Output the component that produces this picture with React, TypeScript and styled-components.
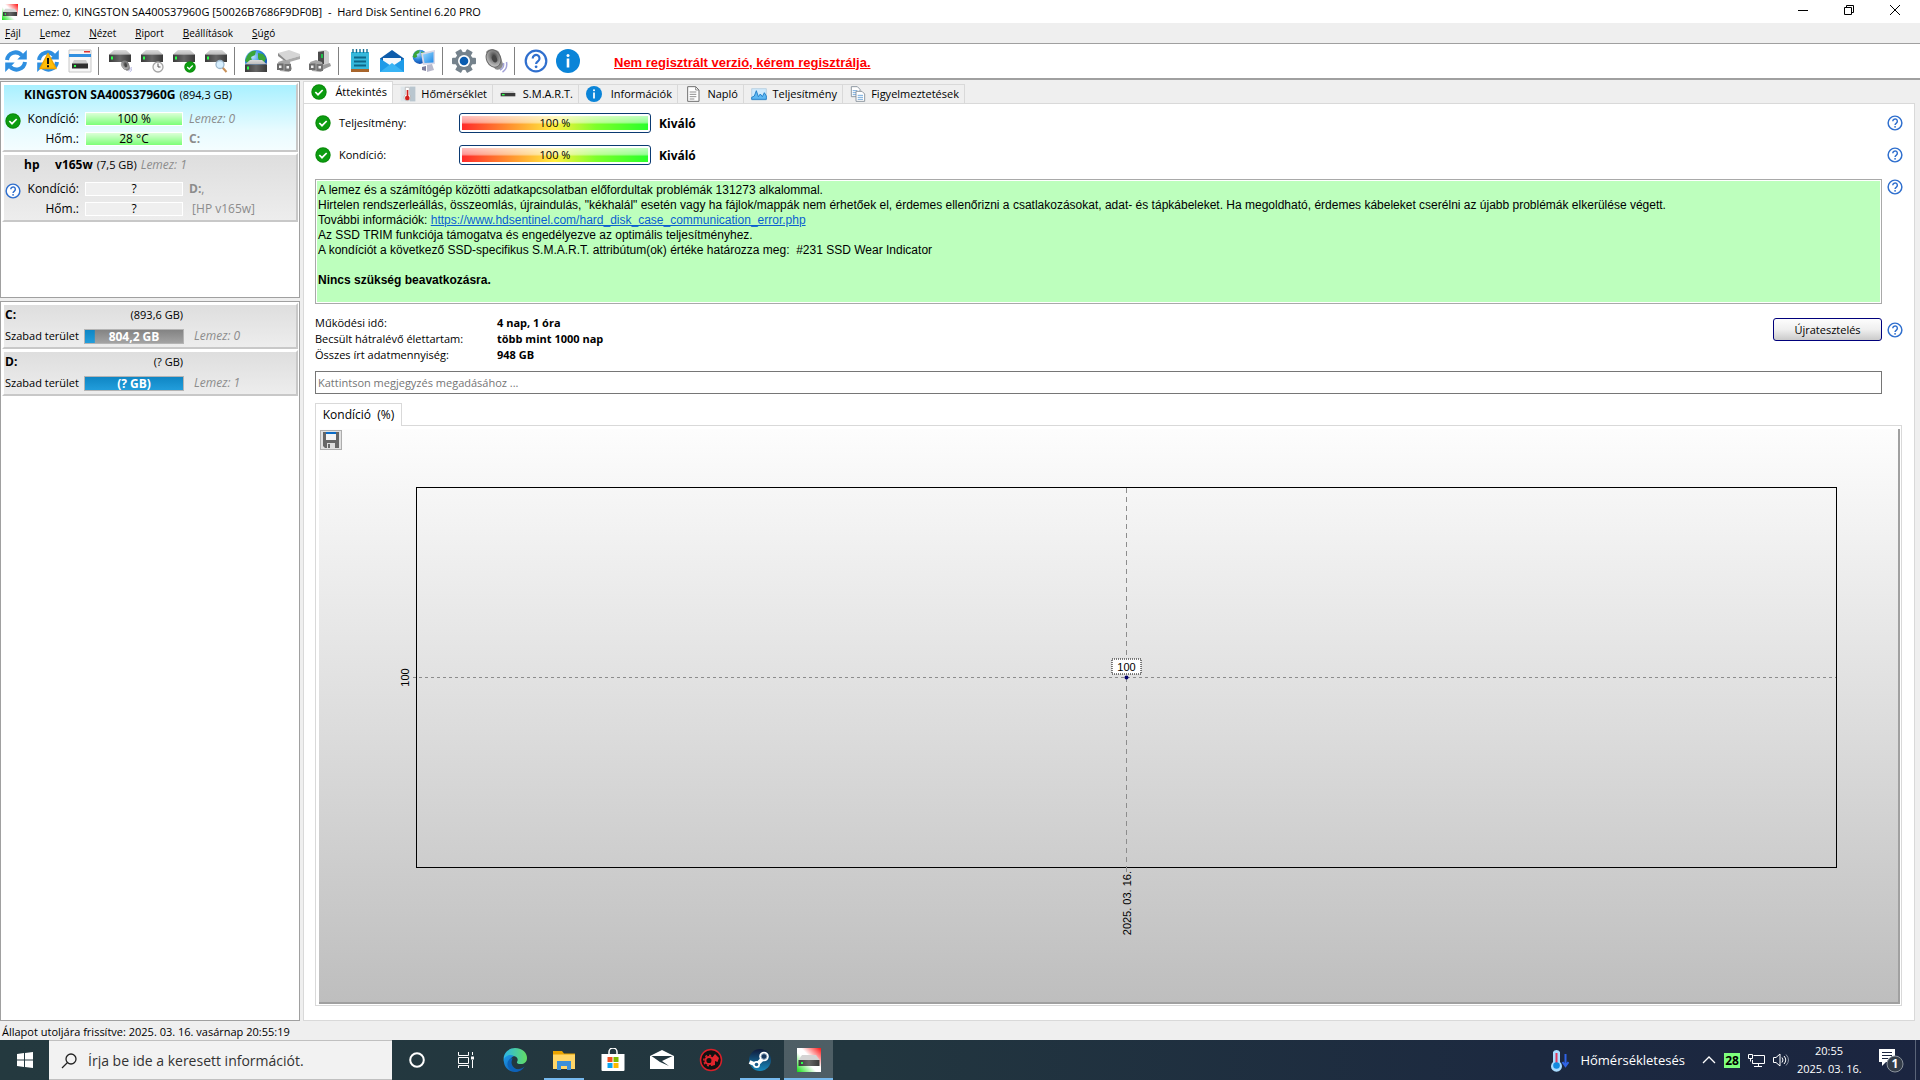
import React from "react";
import styled, { createGlobalStyle, css } from "styled-components";

const ui = '"Open Sans", "Noto Sans", sans-serif';
const arial = '"Liberation Sans", Arial, sans-serif';

const GlobalStyle = createGlobalStyle`
  *, *::before, *::after { box-sizing: border-box; }
  body { margin: 0; background: #efefef; color: #000; font: 12px/16px ${ui}; }
  button, input { font: inherit; color: inherit; margin: 0; }
  button { background: none; border: 0; padding: 0; }
  h1, p, dl, dd { margin: 0; font: inherit; }
  svg { display: block; flex: none; }
`;

/* ---------- window frame ---------- */

const Screen = styled.div`
  min-height: 100vh;
  display: flex;
  flex-direction: column;
`;

const TitleBar = styled.header`
  height: 23px;
  padding: 0 2px;
  background: #fff;
  display: flex;
  align-items: center;
  gap: 5px;
`;

const WindowTitle = styled.h1`
  flex: 1;
  font-size: 11px;
  white-space: pre;
`;

const WindowControls = styled.div`
  display: flex;
  align-self: stretch;
  padding-bottom: 3px;
`;

const ControlButton = styled.button`
  width: 46px;
  display: grid;
  place-items: center;
`;

const MenuBar = styled.nav`
  height: 20px;
  padding-left: 5px;
  display: flex;
  align-items: center;
  gap: 19px;
  font-size: 10px;
`;

const Toolbar = styled.div`
  height: 37px;
  background: #fff;
  border-top: 1px solid #a0a0a0;
  border-bottom: 2px solid #a0a0a0;
  display: flex;
  align-items: center;
`;

const ToolButton = styled.button`
  width: 32px;
  height: 32px;
  display: grid;
  place-items: center;
`;

const ToolSeparator = styled.span`
  width: 1px;
  height: 28px;
  margin: 0 5px 0 2px;
  background: #808080;
`;

const RegisterLink = styled.a`
  margin-left: 30px;
  padding-top: 4px;
  color: #f00;
  font: bold 13px/16px ${arial};
`;

const Workspace = styled.div`
  flex: 1;
  display: flex;
  gap: 3px;
  padding: 1px 5px 0 0;
`;

/* ---------- side panels ---------- */

const Sidebar = styled.aside`
  width: 300px;
  flex: none;
  display: flex;
  flex-direction: column;
  gap: 3px;
`;

const ListPanel = styled.section<{ $grow?: boolean }>`
  border: 1px solid #a0a0a0;
  background: #fff;
  padding: 1px;
  ${(p) => (p.$grow ? "flex: 1;" : "height: 217px;")}
`;

const Card = styled.article<{ $active?: boolean }>`
  border: 2px solid #fff;
  border-right-color: #c8c8c8;
  border-bottom-color: #c8c8c8;
  margin-bottom: 1px;
  background: ${(p) =>
    p.$active
      ? "linear-gradient(#a8f0ff, #e8fbff 70%, #f4fdff)"
      : "linear-gradient(#dedede, #ededed)"};
`;

const CardTitle = styled.div`
  height: 20px;
  padding-left: 20px;
  display: flex;
  align-items: center;
  gap: 4px;
  white-space: pre;
`;

const Capacity = styled.span`
  font-size: 11px;
`;

const DiskGrid = styled.div`
  display: grid;
  grid-template-columns: 16px 52px 98px 1fr;
  grid-auto-rows: 20px;
  align-items: center;
  column-gap: 6px;
  padding: 4px 0 1px 1px;
`;

const StateIcon = styled.span`
  grid-row: 1 / span 2;
  align-self: start;
  padding-top: 4px;
`;

const FieldLabel = styled.span`
  text-align: right;
  white-space: nowrap;
`;

const ValueBar = styled.span<{ $good?: boolean }>`
  height: 14px;
  border: 1px solid #fff;
  background: ${(p) => (p.$good ? "linear-gradient(#dcffd8, #7cff78)" : "#efefef")};
  display: grid;
  place-items: center;
  line-height: 12px;
`;

const Note = styled.span<{ $plain?: boolean }>`
  color: #8c8c8c;
  font-style: ${(p) => (p.$plain ? "normal" : "italic")};
  white-space: nowrap;
`;

const VolumeTitle = styled.div`
  height: 20px;
  padding-left: 1px;
  width: 179px;
  display: flex;
  align-items: center;
  justify-content: space-between;
`;

const VolumeRow = styled.div`
  height: 22px;
  padding-left: 1px;
  display: grid;
  grid-template-columns: 75px 100px 1fr;
  column-gap: 4px;
  align-items: center;
  white-space: nowrap;

  ${Note} { padding-left: 6px; }
`;

const SpaceBar = styled.span<{ $used: number }>`
  height: 15px;
  border: 1px solid #b4b4b4;
  display: grid;
  place-items: center;
  color: #fff;
  font-weight: bold;
  line-height: 13px;
  background:
    linear-gradient(#0f86c4, #229ddb) 0 0 / ${(p) => p.$used}% 100% no-repeat,
    linear-gradient(#838383, #a3a3a3);
`;

/* ---------- main area ---------- */

const Main = styled.main`
  flex: 1;
  min-width: 0;
  display: flex;
  flex-direction: column;
`;

const TabList = styled.div`
  display: flex;
  align-items: flex-end;
`;

const Tab = styled.button<{ $selected?: boolean; $width: number }>`
  width: ${(p) => p.$width}px;
  height: 19px;
  padding: 0 5px 0 7px;
  border: 1px solid #d9d9d9;
  border-width: 1px 1px 0 0;
  display: flex;
  align-items: center;
  justify-content: space-between;
  font-size: 11px;
  white-space: nowrap;
  ${(p) =>
    p.$selected &&
    css`
      height: 23px;
      margin-bottom: -1px;
      padding-bottom: 3px;
      border-left-width: 1px;
      background: #fff;
    `}
`;

const Content = styled.section`
  flex: 1;
  display: flex;
  flex-direction: column;
  padding: 9px 11px 14px;
  background: #fff;
  border: 1px solid #d9d9d9;
`;

const Row = styled.div<{ $top: number; $alignStart?: boolean }>`
  display: flex;
  align-items: ${(p) => (p.$alignStart ? "flex-start" : "center")};
  gap: 5px;
  margin-top: ${(p) => p.$top}px;
`;

const MetricLabel = styled.span`
  width: 139px;
  display: flex;
  align-items: center;
  gap: 8px;
  font-size: 11px;
`;

const Gauge = styled.div`
  width: 192px;
  height: 20px;
  padding: 1px;
  border: 1px solid #0b3a72;
  border-radius: 3px;
  margin-right: 3px;
`;

const GaugeFill = styled.div`
  height: 16px;
  border: 1px solid #fff;
  display: grid;
  place-items: center;
  font-size: 11px;
  line-height: 14px;
  background:
    linear-gradient(rgba(255, 255, 255, 0.7), rgba(255, 255, 255, 0.5) 45%, transparent 60%),
    linear-gradient(90deg, #ff2a2a, #ff9a30 28%, #ffee40 50%, #7dff2a 72%, #2aff2a);
`;

const Verdict = styled.b`
  padding-top: 1px;
`;

const Grow = styled.span`
  flex: 1;
`;

const HelpButton = styled.button`
  width: 16px;
  height: 16px;
  flex: none;
`;

const MessageBox = styled.div`
  flex: 1;
  min-height: 125px;
  border: 1px solid #a9a9a9;
  padding: 1px;
`;

const MessageText = styled.div`
  min-height: 121px;
  background: #bdffbd;
  padding: 2px 1px;
  font: 12px/15px ${arial};
  white-space: pre-wrap;

  a { color: #0a5fd0; }
`;

const Details = styled.dl`
  display: grid;
  grid-template-columns: 182px auto;
  font-size: 11px;
  line-height: 16px;

  dd { font-weight: bold; }
`;

const RetestButton = styled.button`
  width: 109px;
  height: 23px;
  border: 1px solid #00007b;
  border-radius: 3px;
  font-size: 11px;
  background: linear-gradient(#fdfdfd, #efefef 50%, #cacaca);
`;

const CommentInput = styled.input`
  height: 23px;
  margin: 8px 21px 0 0;
  padding: 0 2px;
  border: 1px solid #767676;
  border-radius: 0;
  font-size: 11px;
  background: #fff;

  &::placeholder { color: #757575; opacity: 1; }
`;

const ChartTab = styled.button`
  width: 87px;
  height: 23px;
  margin: 9px 0 -1px;
  border: 1px solid #d9d9d9;
  border-bottom: 0;
  background: #fff;
  position: relative;
  white-space: pre;
`;

const ChartFrame = styled.div`
  flex: 1;
  display: flex;
  margin-right: 1px;
  padding: 3px 1px 1px 3px;
  border: 1px solid #d9d9d9;
`;

const ChartArea = styled.div`
  flex: 1;
  display: flex;
  align-items: stretch;
  padding: 1px 61px 134px 1px;
  border: 1px solid #a0a0a0;
  border-width: 0 2px 2px 0;
  background: linear-gradient(#fdfdfd, #bebebe);
`;

const SaveButton = styled.button`
  width: 22px;
  height: 20px;
  border: 1px solid #adadad;
  background: #e1e1e1;
  display: grid;
  place-items: center;
`;

const Plot = styled.div`
  flex: 1;
  margin: 57px 0 0 74px;
  border: 1px solid #000;
  min-height: 200px;

  svg { width: 100%; height: 100%; overflow: visible; }
  text { font: 11px ${arial}; }
`;

const StatusBar = styled.footer`
  height: 19px;
  padding: 3px 2px 0;
  font-size: 11px;
`;

/* ---------- taskbar ---------- */

const Taskbar = styled.footer`
  height: 40px;
  display: flex;
  color: #fff;
  background: linear-gradient(90deg, #24393f, #22363f 45%, #1c2940 80%, #1b2540);
`;

const TaskButton = styled.button<{ $running?: boolean; $active?: boolean }>`
  width: 49px;
  display: grid;
  place-items: center;
  background: ${(p) => (p.$active ? "rgba(255, 255, 255, 0.2)" : "none")};
  ${(p) =>
    p.$running &&
    css`
      background-image: linear-gradient(#76b9ed, #76b9ed);
      background-repeat: no-repeat;
      background-position: bottom center;
      background-size: ${p.$active ? "100%" : "40px"} 2px;
    `}
`;

const SearchBox = styled.label`
  width: 343px;
  padding: 1px 0 0 12px;
  display: flex;
  align-items: center;
  gap: 11px;
  color: #222;
  background: #f2f2f2;
  border: 1px solid #c0c0c0;
  border-width: 1px 0;

  input {
    flex: 1;
    min-width: 0;
    border: 0;
    padding: 0;
    background: none;
    font-size: 14px;
  }
  input::placeholder { color: #333; opacity: 1; }
`;

const Tray = styled.div`
  margin-left: auto;
  display: flex;
  align-items: center;
`;

const WeatherButton = styled.button`
  display: flex;
  align-items: center;
  gap: 11px;
  margin-right: 17px;
  font-size: 13px;
`;

const TrayIcons = styled.div`
  display: flex;
  align-items: center;
  gap: 8px;
`;

const TempBadge = styled.span`
  width: 16px;
  height: 15px;
  background: #7dff7d;
  color: #000;
  display: grid;
  place-items: center;
  font-weight: bold;
  line-height: 15px;
`;

const Clock = styled.time`
  width: 64px;
  margin: 0 18px 0 7px;
  text-align: center;
  font-size: 11px;
  line-height: 18px;
  white-space: nowrap;
`;

const ShowDesktop = styled.button`
  width: 5px;
  align-self: stretch;
  margin-left: 11px;
  border-left: 1px solid #5a6478;
`;

/* ---------- drawings ---------- */

const Svg = ({ size = 24, children }: { size?: number; children: React.ReactNode }) => (
  <svg width={size} height={size} viewBox="0 0 24 24" aria-hidden="true">{children}</svg>
);

const HiddenSvg = styled.svg`
  position: absolute;
`;

const Defs = () => (
  <HiddenSvg width="0" height="0" aria-hidden="true">
    <defs>
      <linearGradient id="diskTop" x1="0" y1="0" x2="0" y2="1">
        <stop offset="0" stopColor="#dcdcdc" /><stop offset="1" stopColor="#b9b9b9" />
      </linearGradient>
      <linearGradient id="diskFront" x1="0" y1="0" x2="1" y2="0">
        <stop offset="0" stopColor="#3a3a3a" /><stop offset=".5" stopColor="#666" /><stop offset="1" stopColor="#3a3a3a" />
      </linearGradient>
      <linearGradient id="logoBg" x1="1" y1="0" x2="0" y2="1">
        <stop offset="0" stopColor="#ff1010" /><stop offset=".42" stopColor="#fff" />
        <stop offset=".58" stopColor="#fff" /><stop offset="1" stopColor="#10e010" />
      </linearGradient>
      <radialGradient id="globe" cx=".35" cy=".3" r=".8">
        <stop offset="0" stopColor="#bfe4ff" /><stop offset=".5" stopColor="#2a86e0" /><stop offset="1" stopColor="#0a3c9c" />
      </radialGradient>
      <linearGradient id="edgeBlue" x1="0" y1="0" x2="1" y2="1">
        <stop offset="0" stopColor="#1d9be8" /><stop offset="1" stopColor="#0c4fa8" />
      </linearGradient>
      <linearGradient id="edgeGreen" x1="0" y1="0" x2="1" y2="0">
        <stop offset="0" stopColor="#2cb5e8" /><stop offset="1" stopColor="#63dd62" />
      </linearGradient>
      <linearGradient id="steam" x1="0" y1="0" x2="0" y2="1">
        <stop offset="0" stopColor="#0f1a3a" /><stop offset="1" stopColor="#1789bd" />
      </linearGradient>
      <linearGradient id="screen" x1="0" y1="0" x2="1" y2="1">
        <stop offset="0" stopColor="#9bdcff" /><stop offset="1" stopColor="#2089e6" />
      </linearGradient>
      <radialGradient id="cone" cx=".6" cy=".4" r=".7">
        <stop offset="0" stopColor="#3c3c3c" /><stop offset=".35" stopColor="#777" /><stop offset="1" stopColor="#d8d8d8" />
      </radialGradient>
    </defs>
  </HiddenSvg>
);

const DiskShape = () => (
  <>
    <path d="M6 1h12l5 4.500H1z" fill="url(#diskTop)" />
    <path d="M1 5.500h22v7.500H1z" fill="url(#diskFront)" />
    <path d="M3 7.500h2v3H3z" fill="#2cff4a" />
  </>
);

const Logo = ({ size }: { size: number }) => (
  <Svg size={size}>
    <path d="M0 0h24v24H0z" fill="url(#logoBg)" />
    <path d="M5 7h14l3.500 5H1.500z" fill="#d4d4d4" />
    <path d="M1.500 12h21v6h-21z" fill="url(#diskFront)" />
    <path d="M4 14h2v2H4z" fill="#2cff4a" />
  </Svg>
);

const CheckShape = () => (
  <>
    <circle cx="12" cy="12" r="11.500" fill="#0a8a0a" />
    <circle cx="12" cy="12" r="10" fill="#0c9c10" />
    <path d="M6.500 12l4 4L17.500 9" fill="none" stroke="#fff" strokeWidth="2.600" />
  </>
);
const Check = ({ size = 16 }) => <Svg size={size}><CheckShape /></Svg>;

const Help = ({ size = 16 }) => (
  <Svg size={size}>
    <circle cx="12" cy="12" r="10.300" fill="#fff" stroke="#2f6fce" strokeWidth="2.200" />
    <path d="M8.700 9.400a3.400 3.400 0 1 1 5.400 2.700c-1.400 1-2 1.500-2 2.900" fill="none" stroke="#2f6fce" strokeWidth="2.200" />
    <circle cx="12.100" cy="17.800" r="1.400" fill="#2f6fce" />
  </Svg>
);

const Info = ({ size = 24 }) => (
  <Svg size={size}>
    <circle cx="12" cy="12" r="12" fill="#0a84d8" />
    <circle cx="12" cy="6.500" r="1.500" fill="#fff" />
    <path d="M10.700 9.600h2.600v9h-2.600z" fill="#fff" />
  </Svg>
);

const RefreshShape = () => (
  <g fill="none" stroke="#2f8fe0" strokeWidth="4">
    <path d="M3 11C4 3.500 13 .8 18 6.500" />
    <path d="M21 13c-1 7.500-10 10.200-15 4.500" />
    <path d="M22.800 1v9.500h-9.500zM1.200 23v-9.500h9.500z" fill="#2f8fe0" stroke="none" />
  </g>
);

const PlugShape = () => (
  <>
    <path d="M2 13l6-2 6 2 2 7-3 3-9-1z" fill="#a6a6a6" />
    <path d="M1 14.500h6.500V21H1z" fill="#6b6b6b" /><path d="M8.500 15H15v7H8.500z" fill="#747474" />
    <path d="M3 16.500h2.500V19H3zM10.500 17H13v2.500h-2.500z" fill="#f2f2f2" />
  </>
);

const SpeakerShape = () => (
  <>
    <path d="M2 3C5-1 12 0 15 3l4 12c0 4-4 7-8 5z" fill="#8a8a8a" />
    <ellipse cx="9.500" cy="9.500" rx="7" ry="9" fill="url(#cone)" stroke="#666" strokeWidth="1" transform="rotate(-25 9.500 9.500)" />
    <ellipse cx="10.500" cy="10" rx="2.500" ry="3.500" fill="#454545" transform="rotate(-25 10.500 10)" />
    <path d="M16 21c3-1.500 4-4 3.500-7M18.500 23c3.500-2 4.800-5.500 4-10" fill="none" stroke="#a3a3d8" strokeWidth="1.500" />
  </>
);

const GlobeShape = () => (
  <>
    <circle cx="12" cy="12" r="11" fill="url(#globe)" />
    <path d="M3 7c2-4 6-6 9-5l-1 4-4 2 1 4-4 2-3-2zM14 4l5 1 3 4-2 5-4-1-2-4z" fill="#3aa63a" />
  </>
);

const DocShape = () => (
  <>
    <path d="M4 1h12l5 5v17H4z" fill="#fff" stroke="#6f6f6f" strokeWidth="1.500" />
    <path d="M16 1v5h5M7 9h10M7 12.500h10M7 16h10M7 19.500h7" fill="none" stroke="#7d7d7d" strokeWidth="1.300" />
  </>
);

const toolGroups: { name: string; art: React.ReactNode }[][] = [
  [
    { name: "Frissítés", art: <RefreshShape /> },
    {
      name: "Teljes frissítés",
      art: (
        <>
          <RefreshShape />
          <path d="M12 4.500l8 15H4z" fill="#ffbe0a" stroke="#f0a500" strokeWidth="1.500" strokeLinejoin="round" />
          <path d="M11 9h2v6h-2zM11 16.300h2v2h-2z" fill="#111" />
        </>
      ),
    },
    {
      name: "Nézetváltás",
      art: (
        <>
          <path d="M1 1h22v22H1z" fill="#f6f6f6" stroke="#c8c8c8" />
          <path d="M1 5h22v3H1z" fill="#2f8fe0" /><path d="M16 2h6v1.500h-6z" fill="#d33" />
          <path d="M6 11h12l2 4H4z" fill="#ccc" /><path d="M4 14.500h16v5H4z" fill="#2e2e2e" />
          <path d="M6 16h2v2H6z" fill="#2cff4a" />
        </>
      ),
    },
  ],
  [
    { name: "Zaj beállítása", art: <><DiskShape /><g transform="translate(12.500 11.500) scale(.5)"><SpeakerShape /></g></> },
    {
      name: "Rövid teszt",
      art: (
        <>
          <DiskShape />
          <circle cx="18" cy="18" r="5" fill="#f8f8f8" stroke="#a5a5a5" strokeWidth="1.300" />
          <path d="M18 14.500V18h2.500" fill="none" stroke="#555" />
        </>
      ),
    },
    { name: "Hosszú teszt", art: <><DiskShape /><g transform="translate(12 12) scale(.5)"><CheckShape /></g></> },
    {
      name: "Felület teszt",
      art: (
        <>
          <DiskShape />
          <path d="M18.500 18.500l4 4.500" stroke="#c89058" strokeWidth="2" />
          <circle cx="16" cy="15.500" r="4" fill="#d6efff" stroke="#9db7cc" strokeWidth="1.300" />
        </>
      ),
    },
  ],
  [
    { name: "Online információ", art: <><GlobeShape /><g transform="translate(0 10)"><DiskShape /></g></> },
    {
      name: "USB eszköz",
      art: (
        <>
          <path d="M2 4l11-3 11 4v2L10 11z" fill="#d6d6d6" />
          <path d="M2 4l8 7v2L2 7z" fill="#8a8a8a" /><path d="M10 11l14-4v3l-14 4z" fill="#ababab" />
          <PlugShape />
        </>
      ),
    },
    {
      name: "Eszköz leválasztása",
      art: (
        <>
          <path d="M10 2l8-1 3 2v13l-11 1z" fill="#cfcfcf" /><path d="M10 3l6-1v13l-6 2z" fill="#4b4b4b" />
          <path d="M13 5h2v4h-2z" fill="#1fc04a" /><path d="M12 17l10-3 1 3-9 4z" fill="#9c9c9c" />
          <PlugShape />
        </>
      ),
    },
  ],
  [
    {
      name: "Jelentés",
      art: (
        <>
          <path d="M3 3h18v18H3z" fill="#35b8dc" /><path d="M3 20h18v3H3z" fill="#a8652c" />
          <path d="M5 0v4M8.500 0v4M12 0v4M15.500 0v4M19 0v4" stroke="#176f93" strokeWidth="1.400" />
          <path d="M6 8.500h12M6 12.500h12M6 16.500h12" stroke="#0d6688" strokeWidth="1.800" />
        </>
      ),
    },
    {
      name: "E-mail küldése",
      art: (
        <>
          <path d="M0 9.500L12 1l12 8.500V23H0z" fill="#0d5cab" />
          <path d="M3 9h18v8H3z" fill="#f4f8fc" />
          <path d="M0 9.500l12 8 12-8V23H0z" fill="#1e9be8" /><path d="M0 23l12-9 12 9z" fill="#38b4f5" />
        </>
      ),
    },
    {
      name: "Hálózat",
      art: (
        <>
          <g transform="scale(.65)"><GlobeShape /></g>
          <path d="M9 4l14-3v14l-12 1z" fill="#d8d8e8" /><path d="M11 5.500L21.500 3v10.500L12.500 14z" fill="url(#screen)" />
          <path d="M15 16l5-1 2 6-7 2z" fill="#b9b9cc" /><path d="M10 18l4-1v5l-4-1z" fill="#7c7c9a" />
        </>
      ),
    },
  ],
  [
    {
      name: "Beállítások",
      art: (
        <>
          <g fill="#75828c">
            <circle cx="12" cy="12" r="9" />
            {[30, 90, 150].map((a) => <rect key={a} x="8.700" y="0" width="6.600" height="24" rx="1" transform={`rotate(${a} 12 12)`} />)}
          </g>
          <circle cx="12" cy="12" r="6" fill="#fff" /><circle cx="12" cy="12" r="4.300" fill="#0a5cb0" />
        </>
      ),
    },
    { name: "Hang", art: <SpeakerShape /> },
  ],
];

const tabs = [
  { label: "Áttekintés", width: 90, icon: <Check /> },
  {
    label: "Hőmérséklet", width: 100,
    icon: (
      <Svg size={16}>
        <path d="M1 1h22v22H1z" fill="#dfe6ea" /><path d="M15 1h8v22h-8z" fill="#b9c6cf" />
        <path d="M8 2h6v11a5 5 0 1 1-6 0z" fill="#fff" stroke="#aaa" />
        <path d="M10 6h2.500v9H10z" fill="#d0201c" /><circle cx="11" cy="18" r="3.500" fill="#d0201c" />
      </Svg>
    ),
  },
  {
    label: "S.M.A.R.T.", width: 86,
    icon: <Svg size={16}><path d="M4 8h16l3 3H1z" fill="#ccc" /><path d="M1 10.500h22v5H1z" fill="#3a3a3a" /><path d="M3 12h4v2H3z" fill="#2cff4a" /></Svg>,
  },
  { label: "Információk", width: 99, icon: <Info size={16} /> },
  { label: "Napló", width: 66, icon: <Svg size={16}><DocShape /></Svg> },
  {
    label: "Teljesítmény", width: 99,
    icon: (
      <Svg size={16}>
        <path d="M1 4h22v17H1z" fill="#cfeafc" stroke="#a9c6da" />
        <path d="M1 17l4-2 3-8 3 9 3-4 3 4 3-6 3 5v5H1z" fill="#5eb8f2" stroke="#1677c4" strokeWidth="1.300" />
      </Svg>
    ),
  },
  {
    label: "Figyelmeztetések", width: 122,
    icon: (
      <Svg size={16}>
        <path d="M2 1h9l4 4v11H2z" fill="#fff" stroke="#7f8a94" strokeWidth="1.300" /><path d="M4 7h7M4 10h7M4 13h7" stroke="#5f9ed6" strokeWidth="1.300" />
        <path d="M9 8h9l4 4v11H9z" fill="#fff" stroke="#7f8a94" strokeWidth="1.300" /><path d="M11.500 14h8M11.500 17h8M11.500 20h8" stroke="#5f9ed6" strokeWidth="1.300" />
      </Svg>
    ),
  },
];

const menus = ["Fájl", "Lemez", "Nézet", "Riport", "Beállítások", "Súgó"];

const taskApps = [
  {
    name: "Microsoft Edge",
    art: (
      <>
        <path d="M1 14C-1 5 6 0 12 0c8 0 12 5.500 12 10 0 4-3 6-6 6-3 0-4.500-1-4-2 2-3-.5-6-4-6-4 0-8 2-9 6z" fill="url(#edgeGreen)" />
        <path d="M1 11c2-4 7-5 10-3-3 1-4.500 4-4 7 .5 4 5 7 9 6 2-.4 4-1 5.500-2.500C19 22.500 16 24 12 24 5 24 0 18 1 11z" fill="url(#edgeBlue)" />
        <path d="M9 12c-2 5 3 11 9 9.500C14 25 6 24 4.500 17c-.5-4 2-6.500 5-7z" fill="#0d62b8" />
      </>
    ),
  },
  {
    name: "Fájlkezelő", running: true,
    art: (
      <>
        <path d="M1 3h9l2 2.500h11V20H1z" fill="#e8a200" /><path d="M1 6.500h22V21H1z" fill="#ffd667" />
        <path d="M5 22v-9h14v9h-4v-4H9v4z" fill="#3a8fd8" />
      </>
    ),
  },
  {
    name: "Microsoft Store",
    art: (
      <>
        <path d="M8 6V4a4 4 0 0 1 8 0v2" fill="none" stroke="#fff" strokeWidth="1.500" />
        <path d="M.5 6h23v16a1 1 0 0 1-1 1h-21a1 1 0 0 1-1-1z" fill="#fff" />
        <path d="M6.500 9h5v5h-5z" fill="#f25022" /><path d="M12.500 9h5v5h-5z" fill="#7fba00" />
        <path d="M6.500 15h5v5h-5z" fill="#0aa4ef" /><path d="M12.500 15h5v5h-5z" fill="#ffb900" />
      </>
    ),
  },
  {
    name: "Posta",
    art: <><path d="M0 8l12-6 12 6v13H0z" fill="#fff" /><path d="M1.500 8h21L12 13l7 5-9-4z" fill="#22363f" /></>,
  },
  {
    name: "Játékközpont",
    art: (
      <>
        <circle cx="12" cy="12" r="10.500" fill="#111" stroke="#d8202a" strokeWidth="1.500" />
        <circle cx="10" cy="12.500" r="3.600" fill="none" stroke="#e0242c" strokeWidth="2" />
        <circle cx="10" cy="12.500" r="5.200" fill="none" stroke="#e0242c" strokeWidth="1.500" strokeDasharray="2 2" />
        <path d="M13 10l3-4 4 4-1.500 4-2.500-1v4l-4 1z" fill="#e0242c" />
      </>
    ),
  },
  {
    name: "Steam", running: true,
    art: (
      <>
        <circle cx="12" cy="12" r="11" fill="url(#steam)" />
        <path d="M1.500 14l7 3 7-7" fill="none" stroke="#fff" strokeWidth="4" />
        <circle cx="8.500" cy="16.500" r="3.500" fill="#fff" /><circle cx="8.500" cy="16.500" r="1.800" fill="#1a5c8a" />
        <circle cx="16" cy="8.500" r="4.800" fill="#fff" /><circle cx="16" cy="8.500" r="2.800" fill="#16375f" stroke="#8aa0b8" />
      </>
    ),
  },
];

const HelpHere = () => <HelpButton aria-label="Súgó"><Help /></HelpButton>;

const Metric = ({ label, top }: { label: string; top: number }) => (
  <Row $top={top}>
    <MetricLabel><Check />{label}</MetricLabel>
    <Gauge role="meter" aria-label={label} aria-valuenow={100} aria-valuemin={0} aria-valuemax={100}>
      <GaugeFill>100 %</GaugeFill>
    </Gauge>
    <Verdict>Kiváló</Verdict>
    <Grow />
    <HelpHere />
  </Row>
);

export default function App() {
  return (
    <Screen>
      <GlobalStyle />
      <Defs />
      <TitleBar>
        <Logo size={16} />
        <WindowTitle>{"Lemez: 0, KINGSTON SA400S37960G [50026B7686F9DF0B]  -  Hard Disk Sentinel 6.20 PRO"}</WindowTitle>
        <WindowControls>
          <ControlButton aria-label="Kis méret"><svg width="10" height="10"><path d="M0 5.500h10" stroke="#000" /></svg></ControlButton>
          <ControlButton aria-label="Előző méret"><svg width="10" height="10" fill="none" stroke="#000"><path d="M.5 2.500h7v7h-7zM2.500 2V.5h7v7H8" /></svg></ControlButton>
          <ControlButton aria-label="Bezárás"><svg width="10" height="10" stroke="#000"><path d="M0 0l10 10M10 0L0 10" /></svg></ControlButton>
        </WindowControls>
      </TitleBar>

      <MenuBar>
        {menus.map((m) => <button key={m}><u>{m[0]}</u>{m.slice(1)}</button>)}
      </MenuBar>

      <Toolbar role="toolbar">
        {toolGroups.map((group, i) => (
          <React.Fragment key={i}>
            {group.map((t) => <ToolButton key={t.name} aria-label={t.name}><Svg>{t.art}</Svg></ToolButton>)}
            <ToolSeparator />
          </React.Fragment>
        ))}
        <ToolButton aria-label="Súgó"><Help size={24} /></ToolButton>
        <ToolButton aria-label="Névjegy"><Info /></ToolButton>
        <RegisterLink href="#register">Nem regisztrált verzió, kérem regisztrálja.</RegisterLink>
      </Toolbar>

      <Workspace>
        <Sidebar>
          <ListPanel>
            <Card $active>
              <CardTitle><b>KINGSTON SA400S37960G</b><Capacity>(894,3 GB)</Capacity></CardTitle>
              <DiskGrid>
                <StateIcon><Check /></StateIcon>
                <FieldLabel>Kondíció:</FieldLabel><ValueBar $good>100 %</ValueBar><Note>Lemez: 0</Note>
                <FieldLabel>Hőm.:</FieldLabel><ValueBar $good>28 °C</ValueBar><Note $plain><b>C:</b></Note>
              </DiskGrid>
            </Card>
            <Card>
              <CardTitle><b>{"hp     v165w"}</b><Capacity>(7,5 GB)</Capacity><Note>Lemez: 1</Note></CardTitle>
              <DiskGrid>
                <StateIcon><Help /></StateIcon>
                <FieldLabel>Kondíció:</FieldLabel><ValueBar>?</ValueBar><Note $plain><b>D:</b>,</Note>
                <FieldLabel>Hőm.:</FieldLabel><ValueBar>?</ValueBar><Note $plain>&nbsp;[HP v165w]</Note>
              </DiskGrid>
            </Card>
          </ListPanel>
          <ListPanel $grow>
            <Card>
              <VolumeTitle><b>C:</b><Capacity>(893,6 GB)</Capacity></VolumeTitle>
              <VolumeRow><Capacity>Szabad terület</Capacity><SpaceBar $used={10}>804,2 GB</SpaceBar><Note>Lemez: 0</Note></VolumeRow>
            </Card>
            <Card>
              <VolumeTitle><b>D:</b><Capacity>(? GB)</Capacity></VolumeTitle>
              <VolumeRow><Capacity>Szabad terület</Capacity><SpaceBar $used={100}>(? GB)</SpaceBar><Note>Lemez: 1</Note></VolumeRow>
            </Card>
          </ListPanel>
        </Sidebar>

        <Main>
          <TabList role="tablist">
            {tabs.map((t, i) => (
              <Tab key={t.label} role="tab" aria-selected={i === 0} $selected={i === 0} $width={t.width}>
                {t.icon}{t.label}
              </Tab>
            ))}
          </TabList>
          <Content>
            <Metric label="Teljesítmény:" top={0} />
            <Metric label="Kondíció:" top={12} />
            <Row $top={14} $alignStart>
              <MessageBox>
                <MessageText>
                  <p>A lemez és a számítógép közötti adatkapcsolatban előfordultak problémák 131273 alkalommal.</p>
                  <p>Hirtelen rendszerleállás, összeomlás, újraindulás, "kékhalál" esetén vagy ha fájlok/mappák nem érhetőek el, érdemes ellenőrizni a csatlakozásokat, adat- és tápkábeleket. Ha megoldható, érdemes kábeleket cserélni az újabb problémák elkerülése végett.</p>
                  <p>További információk: <a href="https://www.hdsentinel.com/hard_disk_case_communication_error.php">https://www.hdsentinel.com/hard_disk_case_communication_error.php</a></p>
                  <p>Az SSD TRIM funkciója támogatva és engedélyezve az optimális teljesítményhez.</p>
                  <p>{"A kondíciót a következő SSD-specifikus S.M.A.R.T. attribútum(ok) értéke határozza meg:  #231 SSD Wear Indicator"}</p>
                  <p>&nbsp;</p>
                  <p><b>Nincs szükség beavatkozásra.</b></p>
                </MessageText>
              </MessageBox>
              <HelpHere />
            </Row>
            <Row $top={11} $alignStart>
              <Details>
                <dt>Működési idő:</dt><dd>4 nap, 1 óra</dd>
                <dt>Becsült hátralévő élettartam:</dt><dd>több mint 1000 nap</dd>
                <dt>Összes írt adatmennyiség:</dt><dd>948 GB</dd>
              </Details>
              <Grow />
              <Row $top={3}>
                <RetestButton>Újratesztelés</RetestButton>
                <HelpHere />
              </Row>
            </Row>
            <CommentInput aria-label="Megjegyzés" placeholder="Kattintson megjegyzés megadásához ..." />
            <ChartTab role="tab" aria-selected>{"Kondíció  (%)"}</ChartTab>
            <ChartFrame>
              <ChartArea>
                <SaveButton aria-label="Mentés">
                  <svg width="16" height="16" viewBox="0 0 16 16">
                    <path d="M0 0h16v16H2l-2-2z" fill="#666" /><path d="M3 0h10v8H3z" fill="#f4f4f4" />
                    <path d="M3 0h10v2H3z" fill="#0a6cc8" /><path d="M4 11h8v5H4z" fill="#ddd" /><path d="M5 12h2v4H5z" fill="#666" />
                  </svg>
                </SaveButton>
                <Plot>
                  <svg>
                    <g stroke="#8c8c8c" shapeRendering="crispEdges">
                      <line x1="-4" x2="100%" y1="50%" y2="50%" strokeDasharray="3 3" />
                      <line x1="50%" x2="50%" y1="0" y2="100%" strokeDasharray="5 4" />
                    </g>
                    <svg x="50%" y="50%">
                      <rect x="-14.500" y="-18.500" width="29" height="15" fill="#fff" stroke="#000" strokeDasharray="1 1" />
                      <text x="0" y="-7" textAnchor="middle">100</text>
                      <circle r="2" fill="#00006a" />
                    </svg>
                    <svg x="0" y="50%"><text transform="translate(-8 0) rotate(-90)" textAnchor="middle">100</text></svg>
                    <svg x="50%" y="100%">
                      <path d="M0 0v5" stroke="#8c8c8c" />
                      <text transform="translate(4 4) rotate(-90)" textAnchor="end">2025. 03. 16.</text>
                    </svg>
                  </svg>
                </Plot>
              </ChartArea>
            </ChartFrame>
          </Content>
        </Main>
      </Workspace>

      <StatusBar>Állapot utoljára frissítve: 2025. 03. 16. vasárnap 20:55:19</StatusBar>

      <Taskbar>
        <TaskButton aria-label="Start">
          <svg width="16" height="16" fill="#fff"><path d="M0 2l7-1v6.500H0zM8 1l8-1v7.500H8zM0 8.500h7V15l-7-1zM8 8.500h8V16l-8-1z" /></svg>
        </TaskButton>
        <SearchBox>
          <svg width="16" height="16" fill="none" stroke="#222" strokeWidth="1.300"><circle cx="10" cy="6" r="5" /><path d="M6.500 9.500L1 15" /></svg>
          <input aria-label="Keresés" placeholder="Írja be ide a keresett információt." />
        </SearchBox>
        <TaskButton aria-label="Cortana">
          <svg width="16" height="16"><circle cx="8" cy="8" r="6.800" fill="none" stroke="#fff" strokeWidth="2" /></svg>
        </TaskButton>
        <TaskButton aria-label="Feladatnézet">
          <svg width="16" height="16" fill="none" stroke="#fff"><path d="M.5 0v3.500h10V0M.5 5.500h10v6H.5zM.5 16v-2.500h10V16M14.500 0v3M14.500 8v8" /><path d="M13 4.500h3v3h-3z" fill="#fff" stroke="none" /></svg>
        </TaskButton>
        {taskApps.map((a) => (
          <TaskButton key={a.name} aria-label={a.name} $running={a.running}><Svg>{a.art}</Svg></TaskButton>
        ))}
        <TaskButton aria-label="Hard Disk Sentinel" $running $active><Logo size={24} /></TaskButton>

        <Tray>
          <WeatherButton>
            <svg width="18" height="24" viewBox="0 0 18 24">
              <path d="M2 4a4 4 0 0 1 7 0v10a5.500 5.500 0 1 1-7 0z" fill="#a9dcff" />
              <path d="M4.500 5h2v10h-2z" fill="#e2375a" /><circle cx="5.500" cy="17.500" r="3.300" fill="#128ae0" />
              <path d="M14.500 6v11M11.500 14l3 4 3-4" fill="none" stroke="#2f63e6" strokeWidth="2" />
            </svg>
            Hőmérsékletesés
          </WeatherButton>
          <TrayIcons>
            <svg width="14" height="8" fill="none" stroke="#fff" strokeWidth="1.300"><path d="M1 7l6-6 6 6" /></svg>
            <TempBadge>28</TempBadge>
            <svg width="17" height="16" fill="none" stroke="#fff"><path d="M5.500 3.500h11v8h-12V8M.5 2.500h4v4h-4zM2.500 6.500v3M10.500 12v2.500M6 14.500h8" /></svg>
            <svg width="17" height="16" fill="none" stroke="#fff"><path d="M.5 5.500h2.500l4-3.500v12l-4-3.500H.5z" /><path d="M9 5.500q2 2.500 0 5" /><path d="M11 4q3.500 4 0 8" /><path d="M13 2.500q5 5.500 0 11" stroke="#8f97a6" /></svg>
          </TrayIcons>
          <Clock>20:55<br />2025. 03. 16.</Clock>
          <button aria-label="Értesítések">
            <svg width="25" height="26" viewBox="0 0 25 26">
              <path d="M0 2h16v13H7l-4 4v-4H0z" fill="#fff" /><path d="M3 5.500h10M3 8.500h10M3 11.500h6" stroke="#1b2540" />
              <circle cx="16" cy="17" r="8" fill="#333c48" stroke="#8a929c" />
              <text x="16" y="21" fill="#fff" fontSize="12" fontWeight="bold" textAnchor="middle">1</text>
            </svg>
          </button>
          <ShowDesktop aria-label="Asztal megjelenítése" />
        </Tray>
      </Taskbar>
    </Screen>
  );
}
